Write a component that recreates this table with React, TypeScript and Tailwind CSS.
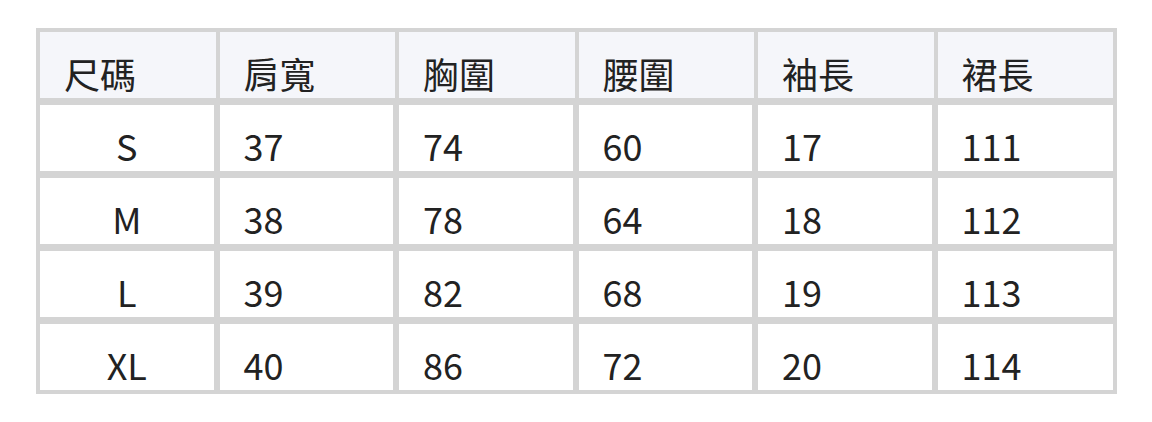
const headers = ["尺碼", "肩寬", "胸圍", "腰圍", "袖長", "裙長"];

const rows = [
  ["S", "37", "74", "60", "17", "111"],
  ["M", "38", "78", "64", "18", "112"],
  ["L", "39", "82", "68", "19", "113"],
  ["XL", "40", "86", "72", "20", "114"],
];

export default function App() {
  return (
    <div
      className="min-h-[422px] w-[1152px] bg-white pl-[36px] pt-[28px] text-[#222]"
      style={{ fontFamily: '"Noto Sans CJK TC", "Noto Sans", sans-serif' }}
    >
      <div className="grid w-[1081px] grid-cols-6 gap-x-1 gap-y-[7px] bg-[#d4d4d4] p-1">
        {headers.map((h) => (
          <div
            key={h}
            className="h-[66px] bg-[#f5f6fa] pl-6 pt-[23px] text-[36px] leading-none"
          >
            {h}
          </div>
        ))}
        {rows.map((row) =>
          row.map((cell, i) => (
            <div
              key={row[0] + i}
              className={
                i === 0
                  ? "h-[66px] border-r-2 border-[#d4d4d4] bg-white pt-[22px] text-center text-[36px] leading-none"
                  : i === 5
                  ? "h-[66px] bg-white pl-6 pt-[22px] text-[36px] leading-none"
                  : "h-[66px] border-r-2 border-[#d4d4d4] bg-white pl-6 pt-[22px] text-[36px] leading-none"
              }
            >
              {cell}
            </div>
          ))
        )}
      </div>
    </div>
  );
}
